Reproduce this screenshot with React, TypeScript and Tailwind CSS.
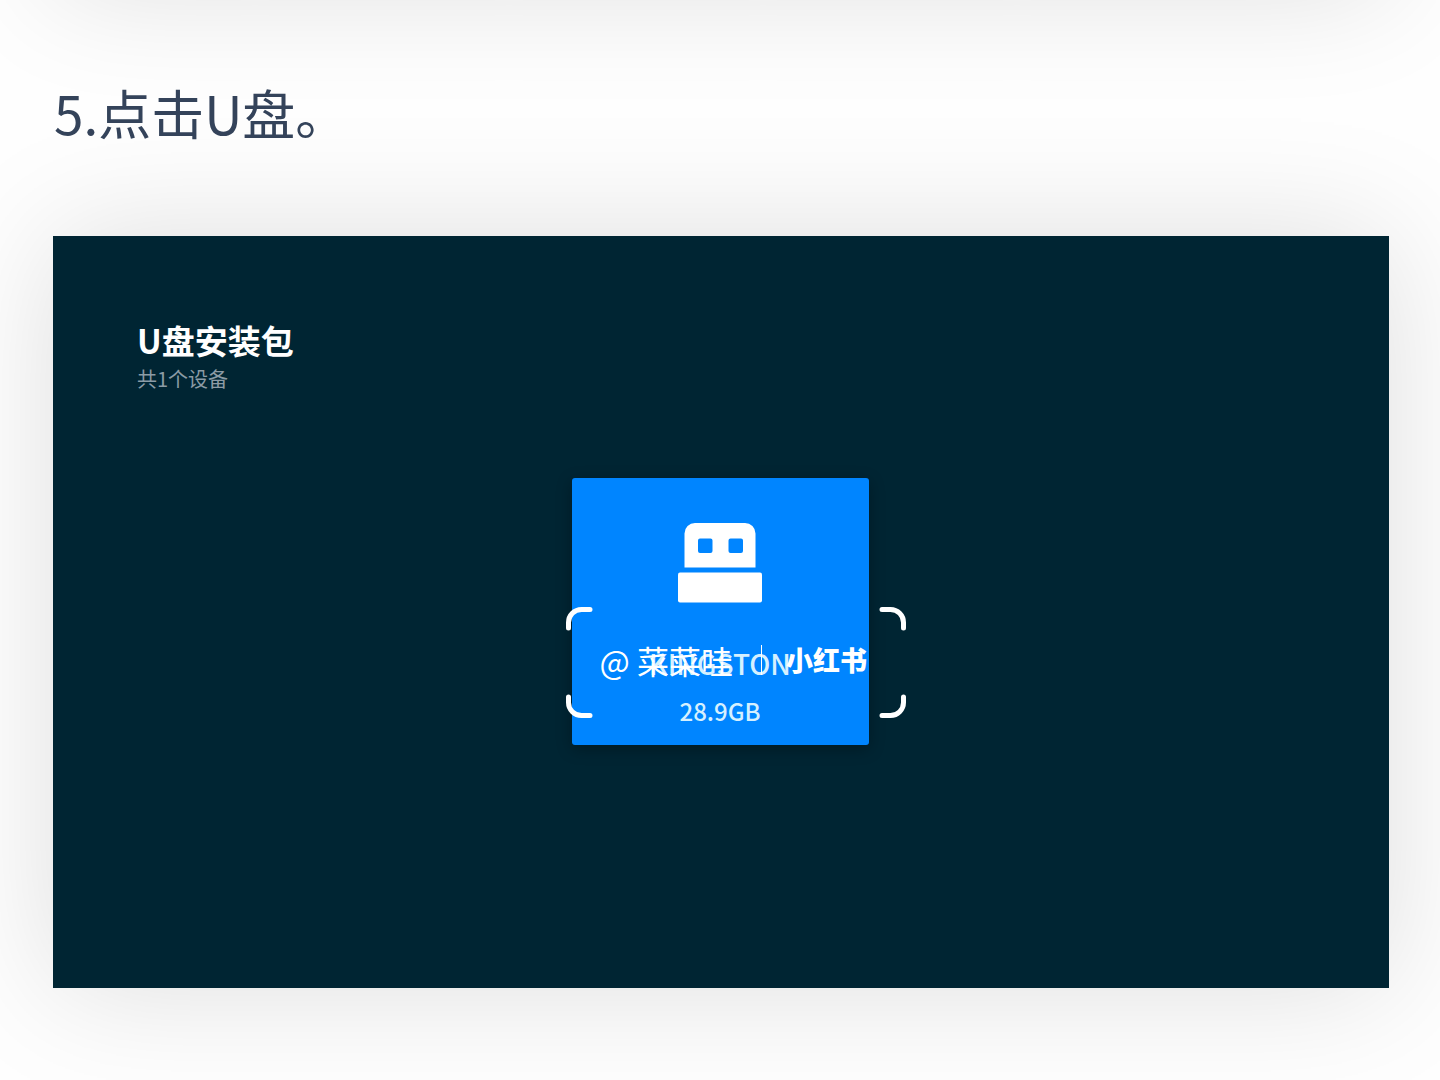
interface Device {
  name: string;
  capacity: string;
}

const devices: Device[] = [{ name: 'KINGSTON', capacity: '28.9GB' }];

function UsbIcon() {
  return (
    <svg width="84" height="81" viewBox="0 0 84 81" fill="white" aria-hidden="true">
      <path
        fillRule="evenodd"
        d="M17 1H67A10.500 10.500 0 0 1 77.500 11.500V45.500H6.500V11.500A10.500 10.500 0 0 1 17 1ZM22 16.500A2 2 0 0 0 20 18.500V29A2 2 0 0 0 22 31H32.500A2 2 0 0 0 34.500 29V18.500A2 2 0 0 0 32.500 16.500ZM52.500 16.500A2 2 0 0 0 50.500 18.500V29A2 2 0 0 0 52.500 31H63A2 2 0 0 0 65 29V18.500A2 2 0 0 0 63 16.500Z"
      />
      <rect x="0" y="50.500" width="84" height="30" rx="2" />
    </svg>
  );
}

function Brackets() {
  return (
    <svg
      className="absolute inset-0 h-full w-full"
      viewBox="0 0 340 111"
      fill="none"
      stroke="white"
      strokeWidth="5"
      strokeLinecap="round"
      aria-hidden="true"
    >
      <path d="M2.500 21V15.500A13 13 0 0 1 15.500 2.500H24" />
      <path d="M316 2.500H324.500A13 13 0 0 1 337.500 15.500V21" />
      <path d="M2.500 90V95.500A13 13 0 0 0 15.500 108.500H24" />
      <path d="M316 108.500H324.500A13 13 0 0 0 337.500 95.500V90" />
    </svg>
  );
}

function Watermark() {
  return (
    <div className="pointer-events-none absolute top-[129px] -left-[6px] flex h-[111px] w-[340px] items-center pb-[6px] pl-[34px] text-white">
      <Brackets />
      <span className="text-[32px] leading-10 font-normal whitespace-nowrap">@ 菜菜哇</span>
      <span className="ml-7 h-[30px] w-px bg-white" />
      <span className="ml-6 text-[27px] leading-10 font-black whitespace-nowrap">小红书</span>
    </div>
  );
}

function DeviceCard({ device }: { device: Device }) {
  return (
    <div className="relative">
      <button className="flex h-[267px] w-[297px] flex-col items-center rounded-[3px] bg-[#0085ff] pt-11 text-[#d5f0ff] shadow-[0_4px_16px_rgba(0,0,0,0.3)]">
        <UsbIcon />
        <span className="mt-10 text-[28px] leading-10 font-medium">{device.name}</span>
        <span className="mt-3 text-2xl leading-8 font-medium">{device.capacity}</span>
      </button>
      <Watermark />
    </div>
  );
}

export default function App() {
  return (
    <main
      lang="zh-CN"
      className="min-h-screen overflow-hidden bg-[#fefefe] pr-[51px] pb-[92px] pl-[53px] font-['Noto_Sans_CJK_SC',sans-serif]"
    >
      {/* bottom edge of the previous step's picture */}
      <div className="-mt-[210px] h-[200px] shadow-[0_0_120px_rgba(0,0,0,0.13)]" />

      <h1 className="mt-[82px] pl-px text-[53px] leading-[80px] text-[#34435a]">5.点击U盘。</h1>

      <section className="mt-[84px] flex aspect-video flex-col bg-[#002533] shadow-[0_0_120px_rgba(0,0,0,0.13)]">
        <header className="px-[84px] pt-[82px]">
          <h2 className="text-[33px] leading-[44px] font-bold text-white">U盘安装包</h2>
          <p className="mt-0.5 text-xl leading-[30px] text-[#8b9ba5]">共{devices.length}个设备</p>
        </header>
        <div className="mt-[84px] flex justify-center pr-0.5">
          {devices.map((device) => (
            <DeviceCard key={device.name} device={device} />
          ))}
        </div>
      </section>
    </main>
  );
}
